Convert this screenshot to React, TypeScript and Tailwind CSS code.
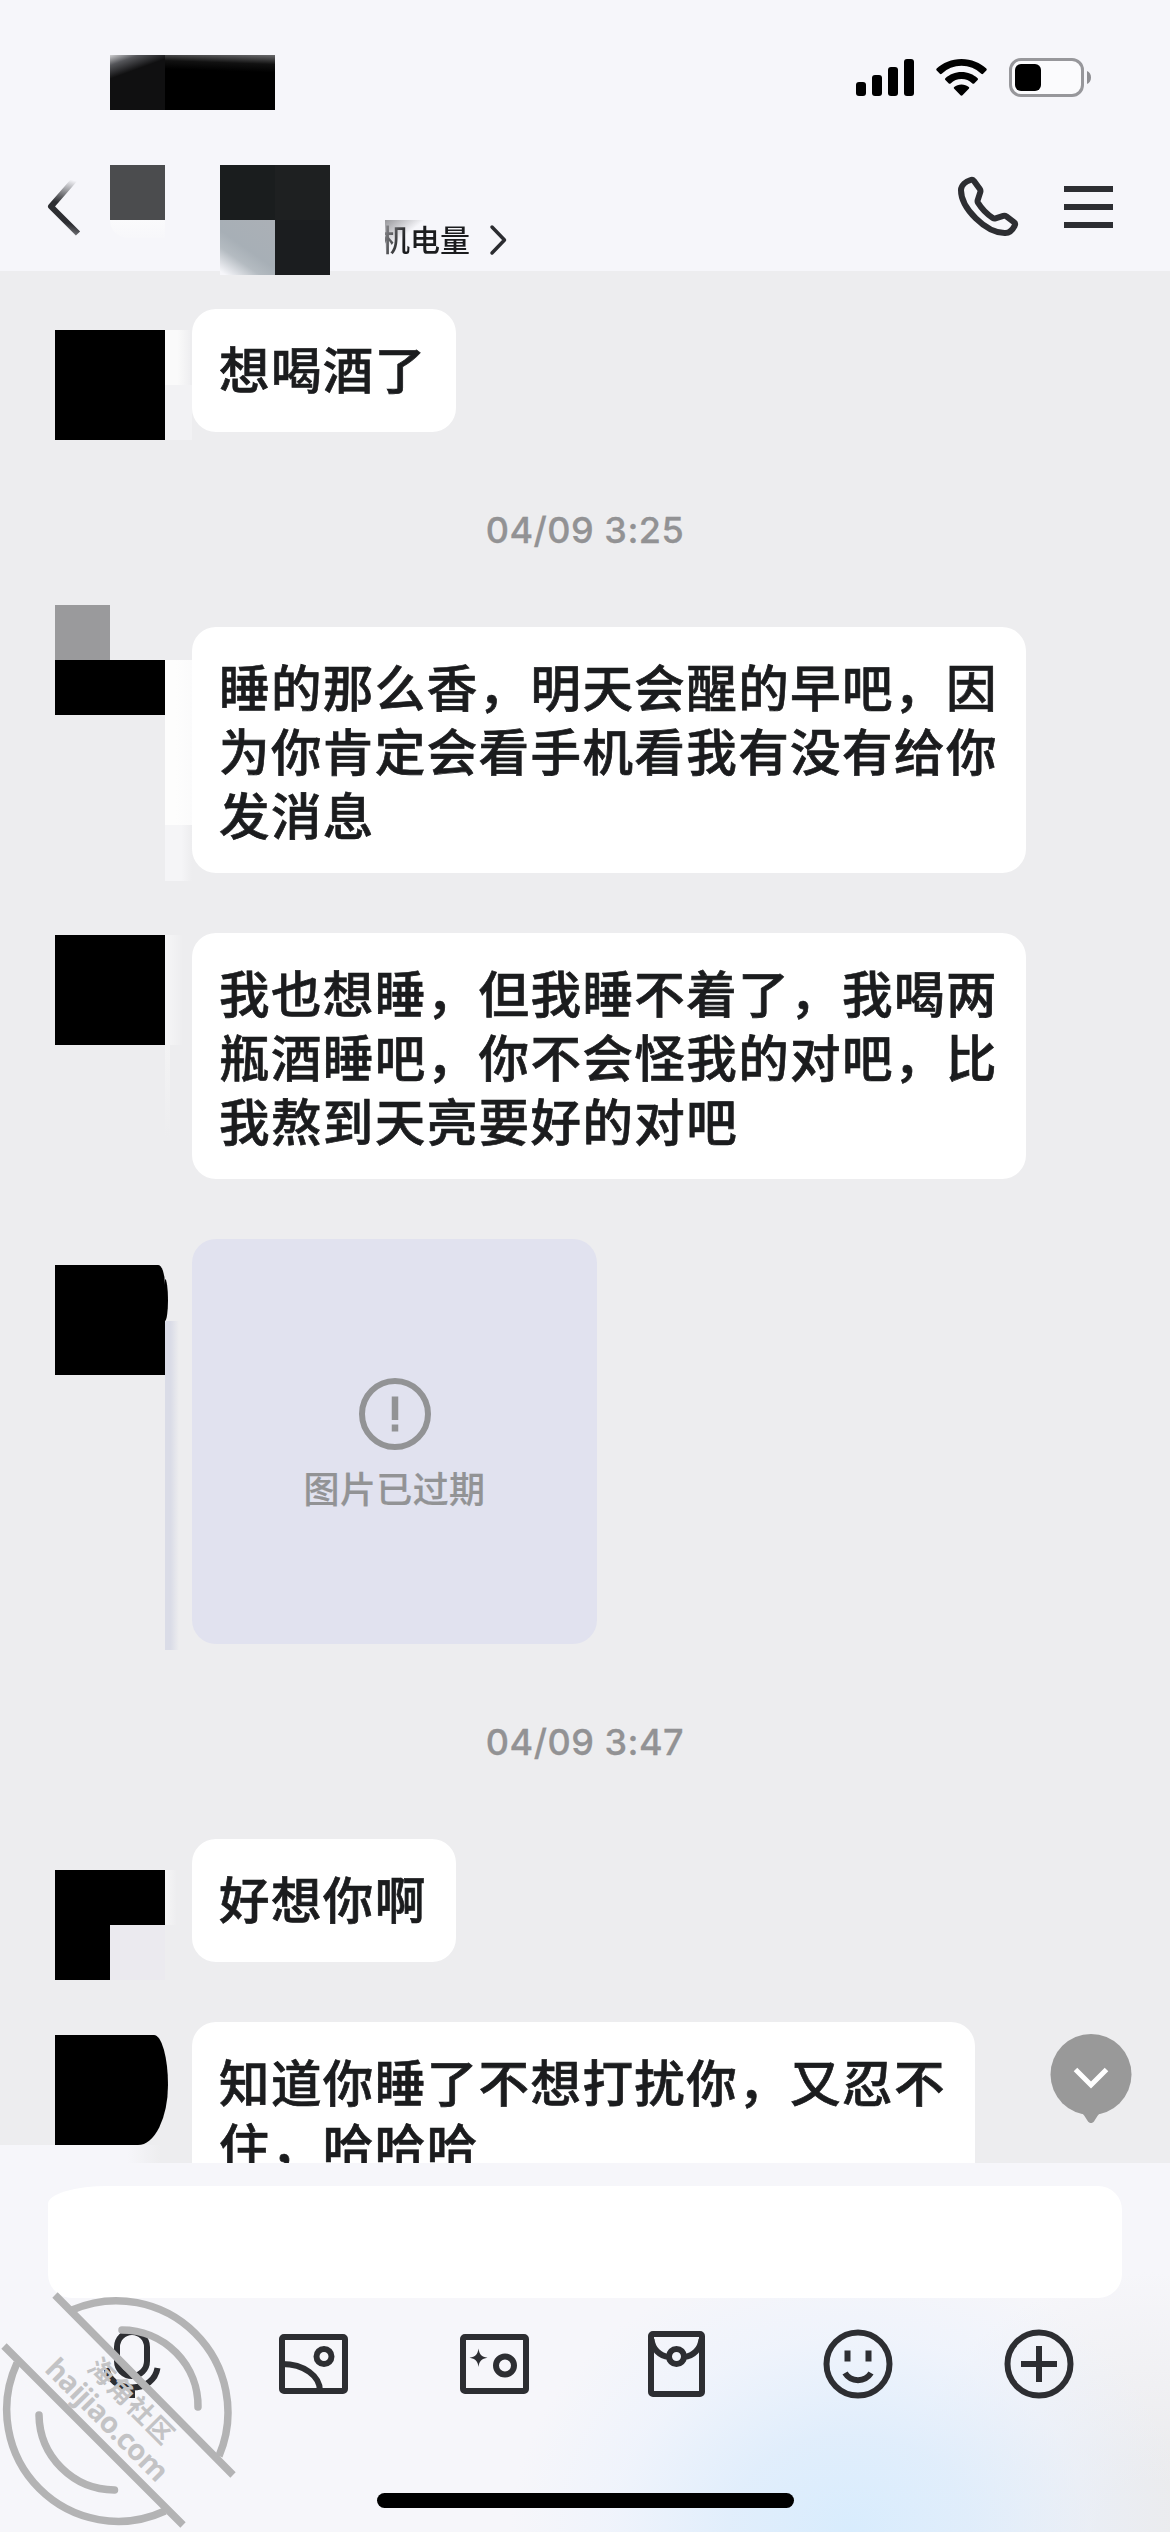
import type { ReactNode } from "react";

type BubbleProps = {
  lines: string[];
  className: string;
};

const Bubble = ({ lines, className }: BubbleProps) => (
  <div
    className={`shrink-0 rounded-[24px] bg-white pl-[27px] pt-[26px] text-[50.5px] font-medium leading-[64px] tracking-[1.42px] text-[#1b1c1e] [-webkit-text-stroke:0.7px_#1b1c1e] ${className}`}
  >
    {lines.map((line) => (
      <p key={line} className="whitespace-nowrap">
        {line}
      </p>
    ))}
  </div>
);

type MessageProps = {
  avatar: ReactNode;
  children: ReactNode;
  className?: string;
};

const Message = ({ avatar, children, className = "" }: MessageProps) => (
  <div className={`flex items-start pl-[55px] ${className}`}>
    <div className="h-0 w-[137px] shrink-0">{avatar}</div>
    {children}
  </div>
);

const Timestamp = ({ children }: { children: ReactNode }) => (
  <div className="mt-[76px] h-[44px] text-center font-['Inter'] text-[36px] font-medium leading-[44px] tracking-[0.5px] text-[#929294] [-webkit-text-stroke:0.3px_#929294]">
    {children}
  </div>
);

const StatusBar = () => (
  <div className="flex h-[165px] items-start pl-[110px] pr-[79px] pt-[55px]">
    <div className="flex h-[55px] w-[165px] bg-black">
      <div className="h-full w-[55px] bg-[linear-gradient(160deg,#d0d0d2_0%,#55565a_14%,#101011_32%)]" />
      <div className="h-full flex-1 bg-[linear-gradient(182deg,#6a6a6c_0%,#111_16%,#000_30%)]" />
    </div>
    <div className="ml-auto flex pt-[3px]">
      <div className="mt-[1px] flex h-[37px] items-end gap-[6px]">
        <span className="h-[14px] w-[10px] rounded-[3px] bg-black" />
        <span className="h-[21px] w-[10px] rounded-[3px] bg-black" />
        <span className="h-[29px] w-[10px] rounded-[3px] bg-black" />
        <span className="h-[37px] w-[10px] rounded-[3px] bg-black" />
      </div>
      <svg className="ml-[22px] mt-[1px]" width="51" height="37" viewBox="0 0 51 37">
        <path d="M25.5 0C35.4 0 44.4 3.9 50.3 9.6c.6.6.6 1.3 0 1.9l-3.2 3.2c-.6.6-1.2.6-1.8 0A28.6 28.6 0 0 0 5.7 14.7c-.6.6-1.2.6-1.8 0L.7 11.5c-.6-.6-.6-1.3 0-1.9C6.6 3.9 15.6 0 25.5 0z" />
        <path d="M25.5 13c6.3 0 12 2.4 16.1 6.2.6.6.6 1.2 0 1.8l-3.4 3.4c-.6.5-1.2.5-1.8 0a16 16 0 0 0-21.8 0c-.6.5-1.2.5-1.8 0L9.4 21c-.6-.6-.6-1.2 0-1.8C13.5 15.4 19.2 13 25.5 13z" />
        <path d="M25.5 25.5c2.8 0 5.3.9 7.3 2.5.6.5.6 1.1 0 1.7l-6.3 6.6c-.6.6-1.4.6-2 0l-6.3-6.6c-.6-.6-.6-1.2 0-1.7 2-1.6 4.5-2.5 7.3-2.5z" />
      </svg>
      <div className="ml-[22px] flex h-[39px] w-[75px] items-center rounded-[12px] border-[3px] border-[#97979b] bg-[#fbfbfd] pl-[3px]">
        <span className="h-[27px] w-[26px] rounded-[6px] bg-black" />
      </div>
      <svg className="ml-[3px] mt-[13px]" width="4" height="13" viewBox="0 0 4 13">
        <path d="M0 0c2.6 1 4 3.5 4 6.5S2.6 12 0 13z" fill="#8e8e92" />
      </svg>
    </div>
  </div>
);

const NavBar = () => (
  <div className="flex h-[110px] items-start pl-[46px] pr-[57px]">
    <svg className="mt-[13px] shrink-0" width="36" height="60" viewBox="0 0 36 60">
      <defs>
        <linearGradient id="back" gradientUnits="userSpaceOnUse" x1="30" y1="3" x2="14" y2="58">
          <stop offset="0" stopColor="#2d2e32" stopOpacity="0" />
          <stop offset="0.45" stopColor="#2d2e32" />
          <stop offset="0.75" stopColor="#2d2e32" />
          <stop offset="1" stopColor="#2d2e32" stopOpacity="0.5" />
        </linearGradient>
      </defs>
      <path d="M29 1 5 28.5 32 55.5" fill="none" stroke="url(#back)" strokeWidth="6" strokeLinejoin="round" />
    </svg>
    <div className="ml-[28px] w-[55px] shrink-0">
      <div className="h-[55px] bg-[#4b4c4e]" />
      <div className="h-[18px] bg-[linear-gradient(180deg,#fafafc,#f7f7fa)] [border-radius:0_0_0_30px]" />
    </div>
    <div className="ml-[55px] grid w-[110px] shrink-0 grid-cols-2">
      <div className="h-[55px] bg-[#1a1d1e]" />
      <div className="h-[55px] bg-[#1e2021]" />
      <div className="h-[55px] bg-[linear-gradient(35deg,#f6f6fa_4%,#b4bbc1_30%,#a7afb6_48%,#abb0b6_100%)]" />
      <div className="h-[55px] bg-[#1b1d1f]" />
    </div>
    <div className="ml-[55px] mt-[55px] flex h-[50px] items-center overflow-hidden bg-[linear-gradient(142deg,#97979b_0%,#c9c9cd_14%,#f6f6fa_27%)]">
      <span className="-ml-[5px] -mt-[14px] whitespace-nowrap bg-[linear-gradient(110deg,#8a8a8e_8%,#1b1c1e_32%)] bg-clip-text text-[30px] font-medium leading-[44px] text-transparent">
        机电量
      </span>
    </div>
    <svg className="ml-[18px] mt-[58px] shrink-0" width="22" height="34" viewBox="0 0 22 34">
      <path d="m4 4 12.5 13L4 30" fill="none" stroke="#2b2c30" strokeWidth="3.5" strokeLinecap="round" strokeLinejoin="round" />
    </svg>
    <svg className="ml-auto mt-[10px] shrink-0" width="62" height="62" viewBox="0 0 62 62">
      <path
        d="M13.6 5c1.3-.5 2.4-.2 3.2.8l6 8.3c.7 1 .9 1.800.5 3l-2.6 8c-.3 1-.2 1.800.3 2.700 4 6.500 8.700 11.300 14.800 15.200.9.6 1.7.7 2.7.4l7.8-2.500c1.200-.4 2.100-.2 3.100.5l7.200 5.400c1.500 1.100 1.900 2.400 1 4-2 4-5 7.100-9.300 7.200C29 58.500 3.800 33 4 15 4.200 10 9 6.500 13.600 5z"
        fill="none"
        stroke="#2d2e32"
        strokeWidth="6"
        strokeLinejoin="round"
      />
    </svg>
    <div className="ml-[45px] mt-[21px] flex w-[49px] flex-col gap-[12px]">
      <span className="h-[6px] bg-[#2d2e32]" />
      <span className="h-[6px] bg-[#2d2e32]" />
      <span className="h-[6px] bg-[#2d2e32]" />
    </div>
  </div>
);

const Toolbar = () => (
  <div className="mt-[24px] flex h-[84px] items-center pl-[93px] pr-[91px] text-[#2d2e32]">
    <div className="flex w-full items-center justify-between">
      <svg width="80" height="76" viewBox="0 0 80 76" fill="none" stroke="currentColor" strokeWidth="6">
        <rect x="24" y="6" width="30" height="44" rx="15" />
        <path d="M13.500 42c2 12 12 19.500 25.500 19.500S62.500 54 64.500 42M39 61v11" />
      </svg>
      <svg width="80" height="76" viewBox="0 0 80 76" fill="none" stroke="currentColor" strokeWidth="6">
        <rect x="8" y="11" width="63" height="54" rx="2" />
        <circle cx="50" cy="30.5" r="7.5" />
        <path d="M8 38c22 0 38 12 38 27" />
      </svg>
      <svg width="80" height="76" viewBox="0 0 80 76" fill="none" stroke="currentColor" strokeWidth="6">
        <rect x="8" y="11" width="63" height="54" rx="2" />
        <circle cx="50" cy="39.5" r="9" />
        <path
          d="M23.5 22.5c.8 6 3 8.3 9 9.2-6 .9-8.2 3.2-9 9.2-.8-6-3-8.3-9-9.2 6-.9 8.2-3.2 9-9.2z"
          fill="currentColor"
          stroke="none"
        />
      </svg>
      <svg width="80" height="76" viewBox="0 0 80 76" fill="none" stroke="currentColor" strokeWidth="6">
        <rect x="14" y="8" width="51" height="60" rx="2" />
        <circle cx="39.5" cy="30.5" r="7.5" />
        <path d="M14.5 13c1 10 8 17 17.5 18M64.5 13c-1 10-8 17-17.5 18" />
      </svg>
      <svg width="80" height="76" viewBox="0 0 80 76" fill="none" stroke="currentColor" strokeWidth="6">
        <circle cx="40" cy="38" r="31.5" />
        <path d="M29.5 24.5v11M50.5 24.5v11M27 47c6 9.5 20 9.5 26 0" />
      </svg>
      <svg width="80" height="76" viewBox="0 0 80 76" fill="none" stroke="currentColor" strokeWidth="6">
        <circle cx="40" cy="38" r="31.5" />
        <path d="M40 20v36M22 38h36" />
      </svg>
    </div>
  </div>
);

const Watermark = () => (
  <svg
    className="absolute bottom-0 left-0"
    width="240"
    height="242"
    viewBox="0 0 240 242"
    fill="none"
    stroke="#b3b3b4"
    strokeWidth="7.5"
  >
    <path d="M72 20A111.5 111.5 0 0 1 219 166M17 73A111.5 111.5 0 0 0 165 221" />
    <path d="M55 5 233 185M4 56l179 179" />
    <path d="M122 40a76 76 0 0 1 76 77M39 125a76 76 0 0 0 75.5 75" strokeLinecap="round" />
    <g fill="#c3c3c5" stroke="none" textAnchor="middle" className="font-bold">
      <text transform="translate(125 118) rotate(45)" className="text-[26px] tracking-[1.5px]">
        海角社区
      </text>
      <text transform="translate(100 137) rotate(45)" textLength="160" className="font-['Open_Sans'] text-[29px]">
        haijiao.com
      </text>
    </g>
  </svg>
);

const App = () => {
  return (
    <div className="relative flex h-[2532px] w-[1170px] flex-col overflow-hidden bg-[#ededef] font-['Noto_Sans_CJK_SC',sans-serif]">
      <header className="h-[271px] shrink-0 bg-[#f6f6fa]">
        <StatusBar />
        <NavBar />
      </header>

      <main className="relative h-[1892px] shrink-0 overflow-hidden pt-[38px]">
        <Message
          avatar={
            <div className="mt-[21px] flex">
              <div className="h-[110px] w-[110px] bg-black" />
              <div>
                <div className="h-[55px] w-[25px] bg-[linear-gradient(90deg,#fafafa_50%,#efeff1)]" />
                <div className="h-[55px] w-[27px] bg-[#f2f2f4]" />
              </div>
            </div>
          }
        >
          <Bubble lines={["想喝酒了"]} className="h-[123px] w-[264px]" />
        </Message>

        <Timestamp>04/09 3:25</Timestamp>

        <Message
          className="mt-[75px]"
          avatar={
            <div className="-mt-[22px] flex">
              <div>
                <div className="h-[55px] w-[55px] bg-[#9a9a9c]" />
                <div className="h-[55px] w-[110px] bg-black" />
              </div>
              <div className="pt-[55px]">
                <div className="h-[165px] w-[37px] bg-[linear-gradient(90deg,#fdfdfd_30%,#f9f9fa)]" />
                <div className="h-[56px] w-[27px] bg-[linear-gradient(90deg,#f5f5f7_60%,#ededef)]" />
              </div>
            </div>
          }
        >
          <Bubble
            lines={["睡的那么香，明天会醒的早吧，因", "为你肯定会看手机看我有没有给你", "发消息"]}
            className="h-[246px] w-[834px]"
          />
        </Message>

        <Message
          className="mt-[60px]"
          avatar={
            <div className="mt-[2px] flex">
              <div className="h-[110px] w-[110px] bg-black" />
              <div>
                <div className="h-[110px] w-[18px] bg-[linear-gradient(90deg,#f6f6f7,#ededef)]" />
                <div className="h-[92px] w-[5px] bg-[linear-gradient(180deg,#f3f3f4,#ededef)]" />
              </div>
            </div>
          }
        >
          <Bubble
            lines={["我也想睡，但我睡不着了，我喝两", "瓶酒睡吧，你不会怪我的对吧，比", "我熬到天亮要好的对吧"]}
            className="h-[246px] w-[834px]"
          />
        </Message>

        <Message
          className="mt-[60px]"
          avatar={
            <div className="mt-[26px] flex">
              <div className="h-[110px] w-[110px] bg-black [border-radius:0_7px_0_0/0_20px_0_0]" />
              <div>
                <div className="mt-[14px] h-[42px] w-[3px] bg-black [border-radius:0_3px_3px_0/0_21px_21px_0]" />
                <div className="h-[329px] w-[14px] bg-[linear-gradient(90deg,#dadce7_40%,#ededef)]" />
              </div>
            </div>
          }
        >
          <div className="flex h-[405px] w-[405px] flex-col items-center rounded-[24px] bg-[#e1e2ef] pt-[138px] text-[#929395]">
            <svg width="74" height="74" viewBox="0 0 74 74" fill="none" stroke="currentColor" strokeWidth="6">
              <circle cx="37" cy="37" r="33" />
              <path d="M37 19.5v23.5M37 47.5v7" strokeWidth="6.5" />
            </svg>
            <p className="mt-[9px] text-[36px] font-medium leading-[54px] tracking-[0.4px] [-webkit-text-stroke:0.2px_#929395]">
              图片已过期
            </p>
          </div>
        </Message>

        <Timestamp>04/09 3:47</Timestamp>

        <Message
          className="mt-[75px]"
          avatar={
            <div className="mt-[31px] flex">
              <div>
                <div className="h-[55px] w-[110px] bg-black" />
                <div className="flex h-[55px] w-[110px] bg-[#ebeaef]">
                  <div className="w-[55px] bg-black" />
                </div>
              </div>
              <div className="h-[55px] w-[12px] bg-[linear-gradient(90deg,#f5f5f6,#ededef)]" />
            </div>
          }
        >
          <Bubble lines={["好想你啊"]} className="h-[123px] w-[264px]" />
        </Message>

        <Message
          className="mt-[60px]"
          avatar={
            <div className="mt-[13px] -ml-[55px] w-[168px]">
              <div className="ml-[55px] h-[110px] bg-black [border-radius:0_14px_30px_0/0_50px_60px_0]" />
              <div className="h-[18px] w-[160px] bg-[linear-gradient(90deg,#f6f6fa_80%,#ededef)]" />
            </div>
          }
        >
          <Bubble lines={["知道你睡了不想打扰你，又忍不", "住，哈哈哈"]} className="h-[187px] w-[783px]" />
        </Message>

        <svg className="absolute bottom-[38px] right-[38px]" width="82" height="92" viewBox="0 0 82 92">
          <circle cx="41" cy="41.5" r="40.5" fill="#999" />
          <path d="M31 79c2.5 2 4.2 5.3 6.7 9 1.9 2.8 4.7 2.8 6.6 0C46.8 84.3 48.5 81 51 79z" fill="#999" />
          <path d="m25.5 36.5 15.5 15.5 15.5-15.5" fill="none" stroke="#fff" strokeWidth="5" />
        </svg>
      </main>

      <footer className="relative h-[369px] shrink-0 bg-[#f6f6fa] bg-[radial-gradient(ellipse_340px_280px_at_850px_100%,#d8ecfd_0%,#dcecfcd0_35%,#e9f1fd80_70%,transparent_100%),radial-gradient(ellipse_260px_260px_at_1150px_100%,#ebebed_20%,transparent_100%)] pt-[23px]">
        <div className="ml-[48px] h-[112px] w-[1074px] bg-white [border-radius:60px_24px_24px_24px/18px_24px_24px_24px]" />
        <Toolbar />
        <div className="ml-[377px] mt-[87px] h-[15px] w-[417px] rounded-full bg-black" />
        <Watermark />
      </footer>
    </div>
  );
};

export default App;
